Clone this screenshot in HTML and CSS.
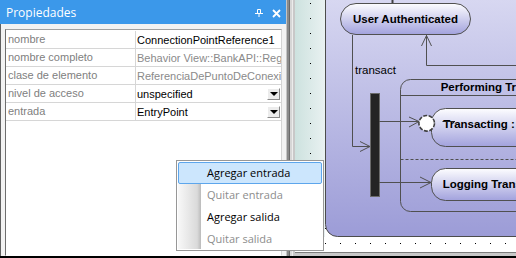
FILE: index.html
```html
<!DOCTYPE html>
<html lang="es">
<head>
    <meta charset="UTF-8">
    <title>Propiedades</title>
    <link rel="stylesheet" href="styles.css">
</head>
<body>

<div class="window">

    <!-- Panel de propiedades -->
    <div class="props">
        <div class="props-title">
            <span>Propiedades</span>
            <span class="title-icons">
                <svg width="8" height="8" viewBox="0 0 8 8">
                    <path d="M2.5 0.5h3v4h-3z M0 4.5h8 M4 4.5v3.5" fill="none" stroke="#fff" stroke-width="1"/>
                </svg>
                <svg width="9" height="9" viewBox="0 0 9 9">
                    <path d="M1 1l7 7 M8 1l-7 7" stroke="#fff" stroke-width="1.8"/>
                </svg>
            </span>
        </div>
        <div class="props-body">
            <div class="props-grid">
                <div class="prop-row">
                    <div class="prop-name">nombre</div>
                    <div class="prop-value">ConnectionPointReference1</div>
                </div>
                <div class="prop-row">
                    <div class="prop-name">nombre completo</div>
                    <div class="prop-value readonly">Behavior View::BankAPI::RegionOfTransacting</div>
                </div>
                <div class="prop-row">
                    <div class="prop-name">clase de elemento</div>
                    <div class="prop-value readonly">ReferenciaDePuntoDeConexión</div>
                </div>
                <div class="prop-row">
                    <div class="prop-name">nivel de acceso</div>
                    <div class="prop-value">unspecified<span class="combo-btn"></span></div>
                </div>
                <div class="prop-row">
                    <div class="prop-name">entrada</div>
                    <div class="prop-value">EntryPoint<span class="combo-btn"></span></div>
                </div>
            </div>
        </div>
    </div>

    <div class="splitter"></div>

    <!-- Diagrama -->
    <div class="diagram">
        <svg class="canvas" width="221" height="252" viewBox="0 0 221 252">
            <defs>
                <linearGradient id="tealBg" x1="0" y1="0" x2="1" y2="0">
                    <stop offset="0" stop-color="#cde2df"/>
                    <stop offset="1" stop-color="#e9f1f1"/>
                </linearGradient>
                <linearGradient id="regionFill" x1="0" y1="0" x2="0" y2="1">
                    <stop offset="0" stop-color="#dcdcf3"/>
                    <stop offset="1" stop-color="#9c9cd7"/>
                </linearGradient>
                <linearGradient id="stateFill" x1="0" y1="0" x2="0" y2="1">
                    <stop offset="0" stop-color="#fdfdff"/>
                    <stop offset="1" stop-color="#a2a2dd"/>
                </linearGradient>
                <pattern id="grid" x="0" y="3" width="15" height="15" patternUnits="userSpaceOnUse">
                    <rect width="1" height="1" fill="#000"/>
                </pattern>
            </defs>

            <rect width="221" height="252" fill="#fff"/>
            <rect width="30" height="237" fill="url(#tealBg)"/>
            <rect x="1" width="220" height="252" fill="url(#grid)"/>

            <!-- region principal -->
            <rect x="30.5" y="-20.5" width="230" height="257" rx="12" fill="url(#regionFill)" stroke="#4c4c4c"/>

            <!-- User Authenticated -->
            <line x1="97.5" y1="0" x2="97.5" y2="3" stroke="#404040" stroke-width="2"/>
            <rect x="45.5" y="3.5" width="130" height="31" rx="15.5" fill="url(#stateFill)" stroke="#505050"/>
            <text class="state-label" x="110.5" y="23.3" text-anchor="middle">User Authenticated</text>

            <!-- transicion transact -->
            <polyline points="57.5,35 57.5,146.5 75,146.5" fill="none" stroke="#505050"/>
            <polyline points="65,141.5 75,146.5 65,151.5" fill="none" stroke="#505050"/>
            <text class="edge-label" x="60" y="74">transact</text>

            <!-- retorno a User Authenticated -->
            <polyline points="221,65.5 131.5,65.5 131.5,35" fill="none" stroke="#505050"/>
            <polyline points="126.5,46 131.5,35.5 136.5,46" fill="none" stroke="#505050"/>

            <!-- Performing Transaction -->
            <rect x="105.5" y="79.5" width="160" height="132" rx="10" fill="none" stroke="#505050"/>
            <line x1="105.5" y1="95.5" x2="221" y2="95.5" stroke="#505050"/>
            <text class="state-label" x="145.7" y="91">Performing Transaction</text>
            <line x1="105.5" y1="159.5" x2="221" y2="159.5" stroke="#505050" stroke-dasharray="3 2"/>

            <!-- fork -->
            <rect x="75.5" y="93.5" width="9" height="103" fill="#242424" stroke="#6a6a6a"/>
            <line x1="84" y1="121.5" x2="124" y2="121.5" stroke="#505050"/>
            <polyline points="114,117 124,121.5 114,127" fill="none" stroke="#505050"/>
            <line x1="84" y1="182.5" x2="136" y2="182.5" stroke="#505050"/>
            <polyline points="125,177 136,182.5 125,188" fill="none" stroke="#505050"/>

            <!-- Transacting -->
            <rect x="136.5" y="108.5" width="120" height="38" rx="14" fill="url(#stateFill)" stroke="#505050"/>
            <text class="state-label" x="148.3" y="127.5">Transacting : Transaction</text>
            <line x1="147.5" y1="121.5" x2="160" y2="121.5" stroke="#202020"/>
            <circle cx="131.7" cy="123.3" r="7.8" fill="#fff" stroke="#404040" stroke-width="1.6" stroke-dasharray="4 1.5"/>

            <!-- Logging -->
            <rect x="136.5" y="168.5" width="120" height="32" rx="14" fill="url(#stateFill)" stroke="#505050"/>
            <text class="state-label" x="147.7" y="187.7">Logging Transaction</text>
        </svg>
        <div class="hscroll"></div>
    </div>

    <!-- Menu contextual -->
    <div class="menu">
        <div class="menu-item active">Agregar entrada</div>
        <div class="menu-item disabled">Quitar entrada</div>
        <div class="menu-item">Agregar salida</div>
        <div class="menu-item disabled">Quitar salida</div>
    </div>

</div>

</body>
</html>
```

FILE: styles.css
```css
/* Ventana */
body {
    margin: 0;
    font-family: "Liberation Sans", Arial, sans-serif;
}
.window {
    position: relative;
    width: 516px;
    height: 256px;
    display: flex;
    border-bottom: 2px solid #000;
    overflow: hidden;
    background: #f0f0f0;
}

/* Panel de propiedades */
.props {
    width: 286px;
    display: flex;
    flex-direction: column;
}
.props-title {
    height: 24px;
    background: #3b98ea;
    color: #fff;
    font-family: "Open Sans", sans-serif;
    font-size: 12px;
    display: flex;
    align-items: center;
    justify-content: space-between;
    padding: 0 5px 0 6px;
}
.title-icons {
    display: flex;
    align-items: center;
    gap: 9px;
    padding-top: 2px;
}
.props-body {
    flex: 1;
    display: flex;
    padding: 5px 4px 0 4px;
    border-left: 1px solid #606060;
    background: #f2f2f2;
}
.props-grid {
    flex: 1;
    background: #fff;
    border: 1px solid;
    border-color: #a0a0a0 #d4d4d4 #fff #6d6d6d;
    padding-top: 1px;
}
.prop-row {
    display: grid;
    grid-template-columns: 130px 1fr;
    height: 17px;
    border-bottom: 1px solid #d6d6d6;
    font-size: 11px;
    line-height: 16px;
}
.prop-name {
    color: #808080;
    padding-left: 2px;
    border-right: 1px solid #d6d6d6;
    white-space: nowrap;
    overflow: hidden;
}
.prop-value {
    color: #000;
    padding-left: 1px;
    white-space: nowrap;
    overflow: hidden;
    display: flex;
    justify-content: space-between;
    align-items: center;
}
.prop-value.readonly {
    color: #8a8a8a;
}
.combo-btn {
    width: 13px;
    height: 12px;
    margin-right: 1px;
    box-sizing: border-box;
    border: 1px solid;
    border-color: #fff #8a8a8a #8a8a8a #fff;
    background: #ececec;
    position: relative;
    flex: none;
}
.combo-btn::after {
    content: "";
    position: absolute;
    left: 2px;
    top: 3px;
    border-left: 4px solid transparent;
    border-right: 4px solid transparent;
    border-top: 4px solid #000;
}

/* Separador */
.splitter {
    width: 9px;
    background: linear-gradient(to right, #c4c4c4 0 1px, #8a8a8a 1px 3px, #6a6a6a 3px 4px, #d6d6d6 4px 6px, #ececec 6px 7px, #c8c8c8 7px 9px);
}

/* Diagrama */
.diagram {
    width: 221px;
    display: flex;
    flex-direction: column;
}
.canvas {
    display: block;
}
.state-label {
    font-family: "Liberation Sans", Arial, sans-serif;
    font-weight: bold;
    font-size: 11.5px;
    fill: #000;
}
.edge-label {
    font-family: "Liberation Sans", Arial, sans-serif;
    font-size: 11.5px;
    fill: #000;
}
.hscroll {
    flex: 1;
    border-top: 1px solid #7c7c7c;
    background: #c8c8c8;
}

/* Menu contextual */
.menu {
    position: absolute;
    left: 176px;
    top: 160px;
    width: 148px;
    height: 91px;
    box-sizing: border-box;
    border: 1px solid #979797;
    padding: 1px;
    background: linear-gradient(to right, #f8f8f8, #dadada 80%, #bcbcbc 95%, #fff 95%) 1px 1px / 24px 87px no-repeat, #fff;
    font-family: "Open Sans", sans-serif;
    font-size: 11px;
}
.menu-item {
    height: 22px;
    box-sizing: border-box;
    border: 1px solid transparent;
    border-radius: 2px;
    padding-left: 28px;
    line-height: 20px;
    color: #000;
}
.menu-item.active {
    background: #cce6fd;
    border-color: #5da6ec;
}
.menu-item.disabled {
    color: #8d8d8d;
}
```
